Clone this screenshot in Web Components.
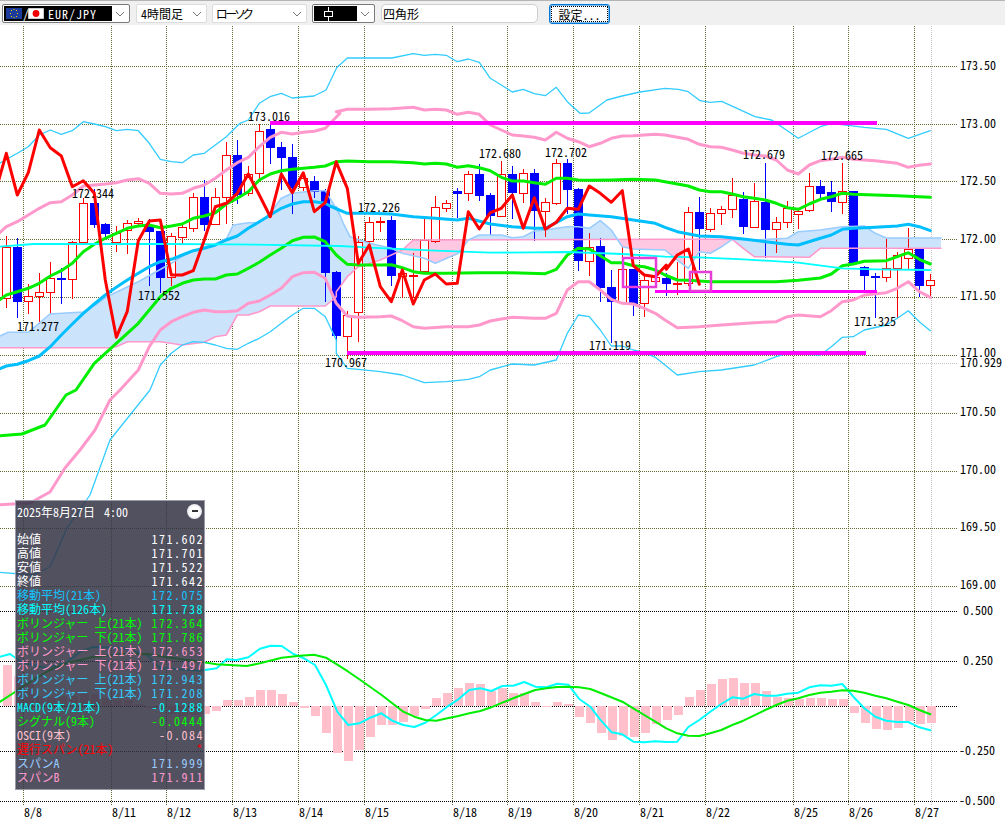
<!DOCTYPE html>
<html lang="ja">
<head>
<meta charset="utf-8">
<title>EUR/JPY</title>
<style>
  html, body { margin: 0; background: #fff; overflow: hidden; }
  fx-app { font-family: "Noto Sans CJK JP", "Liberation Sans", sans-serif; }
</style>
</head>
<body>
<fx-app>
  <fx-toolbar>
    <fx-combo width="128" black="108" style="margin-left:2px">
      <svg width="16" height="11" viewBox="0 0 16 11" style="margin:0 1px 0 1px"><rect width="16" height="11" fill="#1a3a9c"/><g fill="#ffd400"><rect x="7.5" y="1" width="1" height="1"/><rect x="10" y="2" width="1" height="1"/><rect x="11" y="5" width="1" height="1"/><rect x="10" y="8" width="1" height="1"/><rect x="7.5" y="9" width="1" height="1"/><rect x="5" y="8" width="1" height="1"/><rect x="4" y="5" width="1" height="1"/><rect x="5" y="2" width="1" height="1"/></g></svg><span style="margin-right:-1px">/</span><svg width="16" height="11" viewBox="0 0 16 11" style="margin:0 4px 0 0"><rect width="16" height="11" fill="#fff" stroke="#999"/><circle cx="8" cy="5.5" r="3.4" fill="#f00000"/></svg><span style="letter-spacing:1px">EUR/JPY</span>
    </fx-combo>
    <fx-combo width="71" style="margin-left:6px"><span>4時間足</span></fx-combo>
    <fx-combo width="95" style="margin-left:5px"><span style="font-feature-settings:'palt';letter-spacing:-2.4px;margin-left:-1px">ローソク</span></fx-combo>
    <fx-combo width="63" black="43" style="margin-left:5px">
      <svg width="30" height="14" viewBox="0 0 30 14" style="margin-left:0"><path d="M13.5 0v4M13.5 10v4" stroke="#fff" fill="none"/><rect x="9.5" y="4.5" width="8" height="5" fill="none" stroke="#fff"/></svg>
    </fx-combo>
    <fx-edit style="margin-left:6px">四角形</fx-edit>
    <fx-button style="margin-left:11px">設定...</fx-button>
  </fx-toolbar>
  <fx-chart>
    <fx-info title="2025年8月27日  4:00">
      <fx-row color="#fff" value="171.602">始値</fx-row>
      <fx-row color="#fff" value="171.701">高値</fx-row>
      <fx-row color="#fff" value="171.522">安値</fx-row>
      <fx-row color="#fff" value="171.642">終値</fx-row>
      <fx-row color="#11c4ff" value="172.075">移動平均(21本)</fx-row>
      <fx-row color="#00ffff" value="171.738">移動平均(126本)</fx-row>
      <fx-row color="#00ff00" value="172.364">ボリンジャー 上(21本)</fx-row>
      <fx-row color="#00ff00" value="171.786">ボリンジャー 下(21本)</fx-row>
      <fx-row color="#ff99cc" value="172.653">ボリンジャー 上(21本)</fx-row>
      <fx-row color="#ff99cc" value="171.497">ボリンジャー 下(21本)</fx-row>
      <fx-row color="#33ccff" value="172.943">ボリンジャー 上(21本)</fx-row>
      <fx-row color="#33ccff" value="171.208">ボリンジャー 下(21本)</fx-row>
      <fx-row color="#00ffff" value="-0.1288">MACD(9本/21本)</fx-row>
      <fx-row color="#00ff00" value="-0.0444">シグナル(9本)</fx-row>
      <fx-row color="#ffc0cb" value="-0.084">OSCI(9本)</fx-row>
      <fx-row color="#ff0000" value="*">遅行スパン(21本)</fx-row>
      <fx-row color="#99ccff" value="171.999">スパンA</fx-row>
      <fx-row color="#ff99cc" value="171.911">スパンB</fx-row>
    </fx-info>
  </fx-chart>
</fx-app>

<script>
const FONT = `"Noto Sans CJK JP", "Liberation Sans", sans-serif`

class FxApp extends HTMLElement {
  constructor() {
    super()
    this.attachShadow({ mode: "open" }).innerHTML = `
      <style>
        :host { display: flex; flex-direction: column; width: 1005px; height: 822px; }
      </style>
      <slot></slot>`
  }
}

class FxToolbar extends HTMLElement {
  constructor() {
    super()
    this.attachShadow({ mode: "open" }).innerHTML = `
      <style>
        :host {
          display: flex; align-items: flex-start; box-sizing: border-box;
          height: 25px; padding-top: 3px; background: #f0f0f0;
          border-top: 1px solid #b4b4b4;
          font: 12px ${FONT}; font-feature-settings: "hwid"; color: #000;
        }
      </style>
      <slot></slot>`
  }
}

class FxCombo extends HTMLElement {
  constructor() {
    super()
    const width = this.getAttribute("width")
    const black = this.getAttribute("black")
    this.attachShadow({ mode: "open" }).innerHTML = `
      <style>
        :host {
          display: flex; align-items: center; box-sizing: border-box; flex: none;
          width: ${width}px; height: 19px; padding: 1px;
          background: #fff; border: 1px solid ${black ? "#7a7a7a" : "#dcdcdc"}; border-radius: 2px;
        }
        .value {
          display: flex; align-items: center; box-sizing: border-box; height: 100%;
          width: ${black ? black + "px" : "auto"}; flex: ${black ? "none" : "1"};
          padding-left: ${black ? 1 : 3}px; white-space: nowrap;
          background: ${black ? "#000" : "transparent"}; color: ${black ? "#fff" : "#000"};
        }
        .arrow { margin-left: auto; margin-right: 3px; flex: none; }
      </style>
      <div class="value"><slot></slot></div>
      <svg class="arrow" width="10" height="6" viewBox="0 0 10 6"><path d="M1 1l4 4 4-4" fill="none" stroke="#777"/></svg>`
  }
}

class FxEdit extends HTMLElement {
  constructor() {
    super()
    this.attachShadow({ mode: "open" }).innerHTML = `
      <style>
        :host {
          display: flex; align-items: center; box-sizing: border-box; flex: none;
          width: 157px; height: 19px; padding-left: 1px;
          background: #fff; border: 1px solid #cfcfcf; border-radius: 5px;
        }
      </style>
      <slot></slot>`
  }
}

class FxButton extends HTMLElement {
  constructor() {
    super()
    this.attachShadow({ mode: "open" }).innerHTML = `
      <style>
        :host {
          display: flex; box-sizing: border-box; flex: none;
          width: 61px; height: 20px; padding: 1px;
          background: #fdfdfd; border: 1px solid #0078d7; border-radius: 3px;
          box-shadow: inset 0 0 0 .5px #0078d7;
        }
        div {
          flex: 1; display: flex; align-items: center; justify-content: center;
          border: 1px dotted #000;
        }
      </style>
      <div><slot></slot></div>`
  }
}

class FxInfo extends HTMLElement {
  constructor() {
    super()
    this.attachShadow({ mode: "open" }).innerHTML = `
      <style>
        :host {
          position: absolute; left: 15px; top: 475px; box-sizing: border-box;
          display: flex; flex-direction: column;
          width: 190px; height: 290px; padding: 2px 1px 0 1px;
          background: rgba(50, 50, 68, .85); border: 1px solid #9a9aa8;
          font: 12px ${FONT}; font-feature-settings: "hwid"; color: #fff;
        }
        .head {
          display: flex; justify-content: space-between; align-items: center;
          height: 16px; margin-bottom: 13px; white-space: pre; word-spacing: -1.5px;
        }
        .min {
          box-sizing: border-box; width: 15px; height: 15px; margin-right: 1px;
          display: flex; align-items: center; justify-content: center;
          border-radius: 50%; background: radial-gradient(circle, #fff 45%, #c9c9d8 100%);
        }
        .min i { display: block; width: 6px; height: 2px; background: #333; }
      </style>
      <div class="head"><span class="title"></span><span class="min"><i></i></span></div>
      <slot></slot>`
    this.shadowRoot.querySelector(".title").textContent = this.getAttribute("title")
    this.removeAttribute("title")
  }
}

class FxRow extends HTMLElement {
  constructor() {
    super()
    this.attachShadow({ mode: "open" }).innerHTML = `
      <style>
        :host {
          display: flex; justify-content: space-between; align-items: center;
          height: 14px; line-height: 14px; white-space: nowrap; color: ${this.getAttribute("color")};
        }
        .value { letter-spacing: 1.5px; margin-right: -1px; }
      </style>
      <span><slot></slot></span><span class="value">${this.getAttribute("value")}</span>`
  }
}

// zoom crop coordinates to page coordinates
const zoom = (ox, oy, pts) => pts.map(([x, y]) => [ox + x / 3, oy + y / 3])

const candles = [
  ["r",440,595,405,620],["b",440,602,410,650],["r",587,604,548,640],["r",577,587,516,668],["r",535,577,483,640],
  ["b",535,537,500,608],["r",425,538,420,595],["r",310,425,290,425],["b",310,372,265,380],["b",372,398,365,415],
  ["r",398,425,376,452],["r",370,390,357,458],["r",364,370,350,372],["b",375,392,355,555],["b",392,530,390,575],
  ["r",408,530,395,555],["r",382,410,368,428],["r",292,385,275,392],["b",292,372,238,390],["r",290,373,262,373],
  ["r",166,290,124,368],["b",166,282,118,308],["r",222,280,195,285],["r",92,218,70,240],["b",88,140,70,190],
  ["b",142,170,123,267],["b",172,262,130,338],["r",235,262,215,270],["b",244,272,226,290],["b",272,515,265,603],
  ["b",516,705,510,722],["r",645,708,630,775],["r",425,637,405,722],["r",365,423,348,425],["r",362,364,347,392],
  ["b",360,525,345,555],["r",520,527,505,590],["r",525,527,455,590],["r",420,513,350,520],["r",322,422,285,425],
  ["r",310,323,297,333],["b",272,278,262,350],["r",223,280,210,300],["b",222,285,188,300],["b",285,345,277,402],
  ["r",223,347,180,348],["b",222,275,195,355],["r",220,278,205,305],["b",219,330,205,420],["r",307,334,290,408],
  ["r",190,308,175,312],["b",189,266,175,340],["b",266,480,260,510],["r",440,482,395,525],["b",438,560,410,602],
  ["b",561,603,507,725],["r",508,605,435,605],["b",507,608,507,645],["r",541,610,518,648],["r",530,542,520,545],
  ["b",535,550,515,585],["r",549,552,483,582],["r",337,550,318,555],["b",337,383,288,508],["r",340,387,322,392],
  ["r",326,340,315,372],["r",285,326,231,350],["b",296,377,273,398],["r",303,380,245,380],["b",307,387,186,472],
  ["r",367,388,348,455],["r",324,367,300,382],["r",333,342,320,384],["r",259,329,216,332],["b",258,278,238,293],
  ["b",277,304,240,332],["r",273,307,186,338],["b",272,488,270,490],["b",500,526,496,568],["b",527,529,515,652],
  ["r",505,532,414,542],["r",465,505,452,650],["r",448,475,382,505],["b",448,555,448,587],["r",541,556,520,585],
]

const macdBars = [
  41,30,22,10,9,10,10,12,12,8,6,6,2,-2,-3,-8,-10,-9,-8,-4.5,6,6.5,9.5,16.5,16.5,12.5,4,-2,-9.5,-27,-47,-55,-43.5,
  -30.5,-19,-18.5,-16,-9.5,-3,8.5,13,18.5,23,22,15,18,13.5,13,4.5,-.5,4,2.5,-11,-17,-27,-34,-30,-31,-27,-18,-13.5,
  -9,9,16.5,22.5,27,28.5,23.5,23.5,15.5,9.5,8,7,8.5,8.5,7.5,7.5,-6.5,-17,-22.5,-23.5,-21.5,-14.5,-18,-17,
]

const red = [
  ...zoom(0,100,[[-5,245],[19,160],[52,285],[85,218],[118,90],[151,143],[184,168],[217,260],[250,242],[283,280],[316,540],[349,712],[382,634],[415,422],[448,363],[481,360],[514,525],[547,525],[580,512],[613,420],[646,320],[679,310],[712,280],[745,222],[778,285],[811,350],[844,222],[877,278],[910,218],[943,335],[976,308],[1009,185]]),
  ...zoom(330,100,[[19,187],[52,265],[85,490],[118,435],[151,560],[184,605],[217,510],[250,612],[283,540],[316,522],[349,552],[382,550],[415,335],[448,387],[481,338],[514,325],[547,285],[580,385],[613,293],[646,388],[679,367],[712,325],[745,328],[778,258],[811,280],[844,307],[877,272],[910,497],[943,525],[976,530],[1009,495]]),
  ...zoom(665,100,[[4,508],[37,465],[70,447],[103,553]]),
]

const greenUp = [
  ...zoom(0,100,[[-5,602],[19,585],[52,575],[85,565],[118,550],[151,528],[184,512],[217,490],[250,455],[283,433],[316,415],[349,400],[382,385],[415,378],[448,375],[481,383],[514,378],[547,372],[580,355],[613,348],[646,338],[679,312],[712,295],[745,275],[778,240],[811,222],[844,212],[877,208],[910,205],[943,202],[976,198],[1009,185]]),
  ...zoom(330,100,[[19,185],[52,183],[118,185],[184,185],[250,188],[283,192],[316,190],[349,192],[382,202],[415,197],[448,203],[481,212],[514,232],[547,243],[580,243],[613,248],[646,253],[679,235],[712,235],[745,240],[778,241],[844,240],[910,238],[976,240]]),
  ...zoom(665,100,[[0,245],[70,258],[103,270],[136,275],[169,275],[202,282],[235,290],[268,295],[301,300],[334,310],[367,323],[400,328],[433,312],[466,298],[499,290],[532,280],[565,283],[631,285],[697,287],[763,290],[796,292]]),
]

const greenDown = [
  [-5,436],[22,434],[45,425],[66,395],
  ...zoom(0,100,[[228,870],[283,790],[349,730],[415,670],[481,590],[514,565],[547,550],[580,540],[613,537],[646,537],[679,525],[712,522],[745,505],[778,487],[811,465],[844,445],[877,422],[910,412],[943,411],[976,425],[1009,465]]),
  ...zoom(330,100,[[19,465],[52,493],[85,495],[151,495],[184,494],[217,503],[250,515],[283,520],[349,520],[448,518],[547,518],[646,521],[679,508],[712,465],[745,445],[778,447],[811,467],[844,488],[877,488],[910,497],[943,500],[976,510]]),
  ...zoom(665,100,[[0,525],[37,540],[70,541],[136,545],[235,545],[334,545],[400,541],[466,534],[499,522],[532,497],[565,492],[598,484],[664,482],[697,470],[730,458],[763,478],[796,492]]),
]

const pinkUp = [
  ...zoom(0,100,[[-5,402],[19,380],[52,365],[85,345],[118,325],[151,308],[184,305],[217,285],[250,258],[283,255],[316,252],[349,248],[382,240],[415,236],[448,250],[481,280],[514,282],[547,280],[580,265],[613,255],[646,235],[679,210],[712,188],[745,172],[778,140],[811,112],[844,97],[877,102],[910,97],[943,94],[976,85],[1020,40]]),
  ...zoom(330,100,[[19,35],[52,28],[118,28],[184,26],[250,22],[283,30],[316,28],[349,30],[382,43],[415,37],[448,43],[481,75],[514,90],[547,105],[580,108],[613,112],[646,120],[679,97],[712,115],[745,125],[778,140],[811,130],[844,115],[877,108],[910,107],[976,103]]),
  ...zoom(665,100,[[0,105],[70,118],[103,133],[136,140],[169,142],[202,150],[235,160],[268,165],[301,168],[334,180],[367,210],[400,222],[433,195],[466,182],[499,178],[532,172],[565,178],[631,182],[697,190],[730,202],[763,196],[796,192]]),
]

const pinkDown = [
  [-5,505],[30,503],[50,492],[65,468],[80,450],[95,430],[110,400],
  ...zoom(0,100,[[360,870],[415,810],[448,740],[481,690],[514,665],[547,650],[580,637],[613,630],[646,635],[679,635],[712,632],[745,610],[778,603],[811,585],[844,565],[877,530],[910,518],[943,517],[976,535],[1009,610]]),
  ...zoom(330,100,[[19,610],[52,648],[85,652],[151,650],[184,648],[217,662],[250,680],[283,685],[349,680],[415,680],[448,675],[481,663],[514,657],[547,652],[613,655],[646,655],[679,640],[712,570],[745,545],[778,545],[811,570],[844,598],[877,610],[910,612],[943,625],[976,640]]),
  ...zoom(665,100,[[0,660],[37,683],[103,680],[169,675],[268,668],[334,665],[367,650],[400,645],[466,650],[499,632],[532,605],[565,600],[598,585],[664,578],[697,565],[730,545],[763,575],[796,592]]),
]

const thinUp = [
  ...zoom(0,100,[[-5,192],[52,160],[85,140],[118,105],[151,90],[184,103],[217,92],[250,65],[283,72],[316,80],[349,92],[382,88],[415,92],[448,130],[481,178],[514,185],[547,188],[580,165],[613,160],[646,135],[679,110]]),
  ...zoom(240,30,[[0,280],[25,270],[58,220],[90,200],[124,190],[157,204],[222,198],[258,180],[290,113],[322,84],[455,84],[520,71],[553,76],[586,73],[619,76],[652,95],[685,87],[718,97],[751,145],[784,165],[817,186],[850,178],[883,191],[916,197],[949,172],[982,215],[1020,250]]),
  [589,113],[607,100],[622,96],[640,92],
  ...zoom(665,30,[[0,175],[40,178],[70,185],[105,212],[135,217],[170,214],[270,260],[320,270]]),
  ...zoom(665,100,[[330,67],[400,115],[466,80],[500,70],[598,82],[664,88],[730,115],[796,92]]),
]

const thinDown = [
  [-5,572],[33,575],[50,567],[67,528],[90,495],[110,440],
  ...zoom(0,100,[[450,870],[481,795],[514,760],[547,735],[580,725],[613,727],[646,735],[679,745],[712,748],[745,730],[778,715],[811,695],[844,670],[877,645],[910,625],[943,625],[976,650],[1009,720]]),
  ...zoom(330,100,[[19,760],[52,805],[85,808],[151,815],[217,825],[283,848],[349,845],[415,838],[448,830],[481,810],[547,792],[613,795],[679,780],[712,700],[745,645],[778,650],[811,690],[844,738],[877,738],[910,750],[943,758],[976,772]]),
  ...zoom(665,100,[[0,795],[37,825],[103,815],[169,810],[268,795],[334,770],[367,760],[466,765],[499,740],[532,712],[565,710],[598,690],[664,675],[697,655],[730,632],[763,665],[796,692]]),
]

const ma21 = [
  ...zoom(0,100,[[-5,808],[19,798],[52,793],[85,782],[118,768],[151,740],[184,705],[217,672],[250,640],[283,612],[316,585],[349,562],[382,540],[415,520],[448,500],[481,485],[514,478],[547,465],[580,452],[613,445],[646,435],[679,420],[712,408],[745,385],[778,365],[811,345],[844,325],[877,312],[910,305],[943,305],[976,310]]),
  ...zoom(330,100,[[0,318],[52,340],[118,340],[184,342],[250,350],[316,355],[382,360],[415,355],[481,372],[547,380],[613,385],[646,385],[712,350],[745,342],[778,345],[844,350],[910,360],[976,370]]),
  ...zoom(665,100,[[0,382],[37,395],[103,408],[169,410],[235,417],[301,425],[367,433],[400,435],[466,415],[499,405],[532,388],[565,385],[631,382],[697,378],[730,373],[763,380],[796,392]]),
]

const ma126 = [
  ...zoom(0,100,[[-5,440],[100,432],[300,432],[500,432],[700,433],[1020,438]]),
  ...zoom(330,100,[[118,443],[316,452],[481,458],[712,456],[877,462]]),
  ...zoom(665,100,[[0,470],[103,472],[235,478],[400,488],[532,505],[631,508],[796,510]]),
]

const spanA = [
  ...zoom(0,100,[[0,708],[25,697],[85,697],[150,642],[250,636],[290,612],[320,590],[415,545],[514,490],[547,468],[613,440],[646,432],[680,415],[700,375],[745,368],[778,368],[811,340],[844,295],[877,280],[943,272],[976,272],[1020,345]]),
  ...zoom(330,100,[[19,320],[40,370],[60,410],[118,430],[184,445],[217,460],[283,475],[316,490],[385,460],[415,420],[448,405],[514,405],[547,413],[580,410],[613,393],[646,390],[679,385],[712,380],[745,380],[778,385],[811,362],[844,390],[877,440],[910,447]]),
  ...zoom(665,100,[[0,450],[37,480],[70,505],[103,455],[136,460],[170,440],[202,418],[268,420],[367,415],[400,395],[466,390],[532,380],[598,378],[631,400],[664,414],[828,414]]),
]

const spanB = [
  ...zoom(0,100,[[0,743],[330,743],[349,740],[382,725],[481,725],[547,735],[613,727],[646,710],[679,705],[712,645],[745,645],[778,635],[811,618],[976,618],[1009,590]]),
  ...zoom(330,100,[[19,575],[52,530],[85,500],[151,480],[217,450],[250,420]]),
  ...zoom(665,100,[[0,418],[202,418],[235,445],[268,470],[433,472],[466,445],[828,445]]),
]

const macdLine = [
  [-5,658],[10,654],[23,663],[47,668],[67,662],[80,652],[93,647],[123,648],[147,655],[160,668],
  ...zoom(200,600,[[0,212],[50,205],[80,178],[110,180],[145,172],[180,146],[212,137],[245,138],[280,162],[312,175],[345,195],[378,255],[412,335],[445,375],[478,370],[511,353],[544,340],[577,362],[610,375],[643,381],[676,368],[709,345],[742,320],[775,298],[808,270],[841,265],[874,273],[907,258],[940,257],[973,246],[1006,260],[1039,262],[1072,251],[1105,254],[1138,297],[1171,320]]),
  ...zoom(600,600,[[0,358],[35,397],[67,403],[100,425],[133,427],[166,424],[199,426],[232,425],[265,381],[298,360],[331,335],[364,312],[397,292],[430,296],[463,282],[496,287],[529,287],[562,281],[595,278],[628,262],[661,256],[694,257],[727,252],[760,290],[793,325],[826,350],[859,362],[892,366],[925,366],[958,382],[991,391]]),
]

const macdSignal = [
  [-5,705],[15,692],[33,680],[50,670],[67,663],[93,657],[123,654],[147,654],[173,658],
  ...zoom(200,600,[[0,185],[50,193],[140,198],[180,190],[245,173],[300,167],[342,164],[378,173],[412,194],[445,215],[478,238],[544,284],[610,335],[643,350],[676,360],[709,362],[742,355],[775,348],[808,340],[841,333],[874,322],[907,308],[940,295],[973,282],[1006,270],[1039,265],[1072,261],[1105,260],[1138,262],[1171,267]]),
  ...zoom(600,600,[[0,278],[67,305],[100,325],[133,345],[166,365],[199,385],[232,400],[265,407],[298,408],[331,400],[364,390],[397,375],[430,362],[463,346],[496,330],[529,315],[562,302],[595,295],[628,285],[661,278],[694,275],[727,271],[760,272],[793,278],[826,287],[859,295],[892,305],[925,315],[958,330],[991,343]]),
]

const priceGrid = [66, 124, 181, 239, 297, 355, 413, 471, 528, 586]
const macdGrid = [611, 661, 706, 751, 801]
const dateGrid = [
  [23,"8/8"],[111,"8/11"],[166,"8/12"],[232,"8/13"],[298,"8/14"],[364,"8/15"],[452,"8/18"],[507,"8/19"],
  [573,"8/20"],[639,"8/21"],[705,"8/22"],[793,"8/25"],[848,"8/26"],[914,"8/27"],
]
const axisLabels = [
  [960,65,"173.50"],[960,123,"173.00"],[960,180,"172.50"],[960,238,"172.00"],[960,295,"171.50"],[960,352,"171.00"],
  [960,362,"170.929"],[960,411,"170.50"],[960,469,"170.00"],[960,526,"169.50"],[960,584,"169.00"],
  [963,610,"0.500"],[963,660,"0.250"],[959,750,"-0.250"],[959,800,"-0.500"],
]
const highLows = [
  [248,116,"173.016"],[72,193,"172.344"],[138,295,"171.552"],[17,326,"171.277"],[325,362,"170.967"],[358,207,"172.226"],
  [479,153,"172.680"],[545,152,"172.702"],[589,345,"171.119"],[743,154,"172.679"],[821,155,"172.665"],[854,321,"171.325"],
]

const points = (pts) => pts.map(([x, y]) => `${x.toFixed(1)},${y.toFixed(1)}`).join(" ")
const line = (pts, color, width) =>
  `<polyline points="${points(pts)}" fill="none" stroke="${color}" stroke-width="${width}" stroke-linejoin="round" stroke-linecap="round"/>`
const label = ([x, y, text]) => `<text x="${x}" y="${y - 1}" dominant-baseline="central">${text}</text>`

const yAt = (pts, x) => {
  for (let i = 1; i < pts.length; i++) {
    if (x <= pts[i][0]) {
      const [x0, y0] = pts[i - 1]
      const [x1, y1] = pts[i]
      return x1 === x0 ? y1 : y0 + ((y1 - y0) * (x - x0)) / (x1 - x0)
    }
  }
  return pts[pts.length - 1][1]
}

// kumo: blue where span A is on top, pink where span B is on top
const cloud = () => {
  let blue = ""
  let pink = ""
  for (let x = 0; x < 941; x++) {
    const a = yAt(spanA, x + 0.5)
    const b = yAt(spanB, x + 0.5)
    if (a < b) blue += `M${x} ${a.toFixed(1)}V${b.toFixed(1)}h1V${a.toFixed(1)}z`
    else pink += `M${x} ${b.toFixed(1)}V${a.toFixed(1)}h1V${b.toFixed(1)}z`
  }
  return `<g shape-rendering="crispEdges"><path d="${blue}" fill="#cce4fb"/><path d="${pink}" fill="#ffc8e2"/></g>`
}

const candleSvg = () =>
  candles.map(([kind, top, bottom, high, low], i) => {
    const x = 6.5 + 11 * i
    const color = kind === "r" ? "#ff0000" : "#0000ff"
    const y = (v) => Math.round(100 + v / 3) + 0.5
    const fill = kind === "r" ? "#fff" : color
    return `<path d="M${x} ${y(high)}V${y(low)}" stroke="${color}"/><rect x="${x - 4}" y="${y(top)}" width="8" height="${Math.max(1, y(bottom) - y(top))}" fill="${fill}" stroke="${color}"/>`
  }).join("")

const barSvg = () =>
  macdBars.map((h, i) => {
    const x = 2.5 + 11 * i
    return `<rect x="${x}" y="${h > 0 ? 706 - h : 706}" width="9" height="${Math.abs(h)}"/>`
  }).join("")

class FxChart extends HTMLElement {
  constructor() {
    super()
    const grid = `
      <g shape-rendering="crispEdges" stroke-dasharray="1 1" fill="none">
        <g stroke="#5f6b30">
          ${priceGrid.map((y) => `<path d="M0 ${y + 0.5}H958"/>`).join("")}
          ${dateGrid.map(([x]) => `<path d="M${x + 0.5} 26V806"/>`).join("")}
        </g>
        <path d="M0 363.5H958M931.5 26V806" stroke="#c4c4c4"/>
        <g stroke="#000">${macdGrid.map((y) => `<path d="M0 ${y + 0.5}H958"/>`).join("")}</g>
      </g>`

    const rects = `
      <g fill="none" stroke="#e83cd8" stroke-width="2.5">
        <rect x="623" y="258" width="33" height="29"/>
        <rect x="690" y="272" width="21" height="19"/>
      </g>`

    const levels = `
      <g fill="#ff00ff" shape-rendering="crispEdges">
        <rect x="270" y="121" width="607" height="4"/>
        <rect x="347" y="351" width="519" height="4"/>
        <rect x="655" y="290" width="222" height="3"/>
      </g>`

    this.attachShadow({ mode: "open" }).innerHTML = `
      <style>
        :host { display: block; position: relative; flex: 1; }
        svg { display: block; }
        text { font: 12px ${FONT}; font-feature-settings: "hwid"; fill: #000; }
      </style>
      <svg width="1005" height="797" viewBox="0 25 1005 797">
        ${grid}
        ${cloud()}
        <g shape-rendering="crispEdges">${candleSvg()}</g>
        <g fill="#ffc0cb" shape-rendering="crispEdges">${barSvg()}</g>
        ${line(spanB, "#ff99cc", 1.6)}
        ${line(spanA, "#99ccff", 1.6)}
        ${line(thinUp, "#33ccff", 1.3)}
        ${line(thinDown, "#33ccff", 1.3)}
        ${line(pinkUp, "#ff99cc", 3)}
        ${line(pinkDown, "#ff99cc", 3)}
        ${line(greenUp, "#00ee00", 3)}
        ${line(greenDown, "#00ee00", 3)}
        ${line(ma21, "#00bfff", 3)}
        ${line(ma126, "#00ffff", 1.8)}
        ${line(macdLine, "#00ffff", 2)}
        ${line(macdSignal, "#00ee00", 2)}
        ${line(red, "#ff0000", 3)}
        ${levels}
        ${rects}
        ${highLows.map(label).join("")}
        ${axisLabels.map(label).join("")}
        ${dateGrid.map(([x, t]) => label([x + 1, 812, t])).join("")}
      </svg>
      <slot></slot>`
  }
}

customElements.define("fx-app", FxApp)
customElements.define("fx-toolbar", FxToolbar)
customElements.define("fx-combo", FxCombo)
customElements.define("fx-edit", FxEdit)
customElements.define("fx-button", FxButton)
customElements.define("fx-info", FxInfo)
customElements.define("fx-row", FxRow)
customElements.define("fx-chart", FxChart)
</script>
</body>
</html>
